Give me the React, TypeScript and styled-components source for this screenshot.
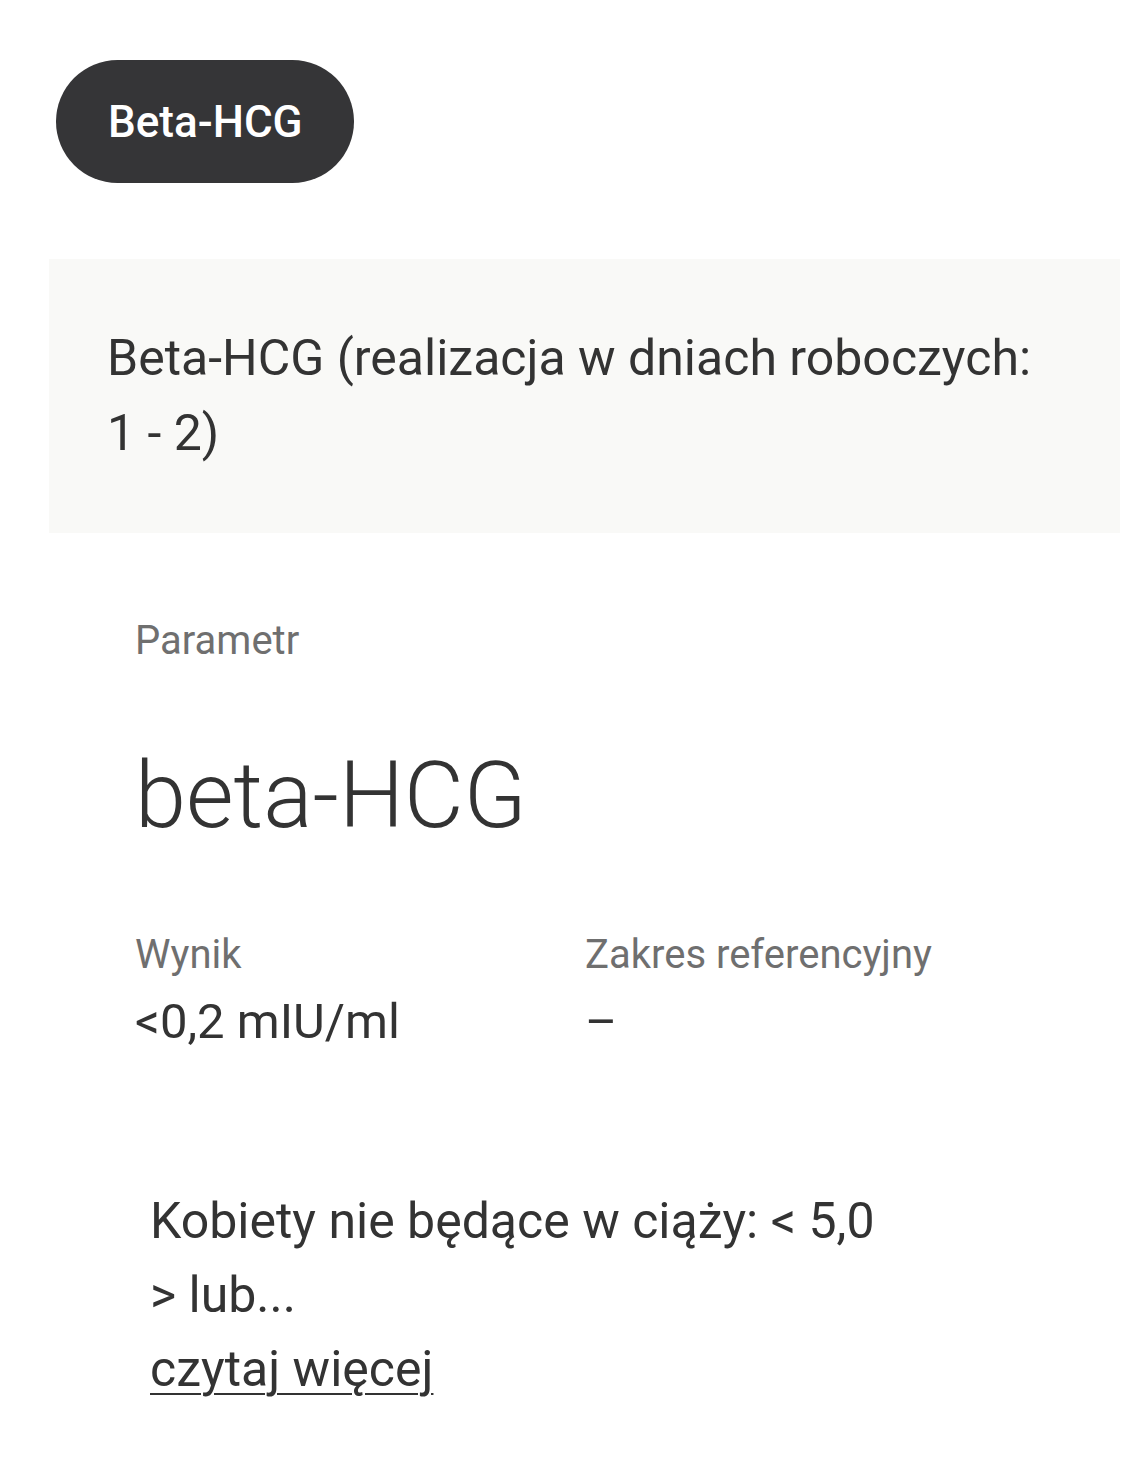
import React from 'react';
import styled, { createGlobalStyle } from 'styled-components';

const GlobalStyle = createGlobalStyle`
  body {
    margin: 0;
    background: #ffffff;
    font-family: Roboto, 'Noto Sans', sans-serif;
    color: #333333;
  }
`;

const Page = styled.div`
  display: flex;
  flex-direction: column;
  padding: 60px 4px 0 49px;
`;

const TagPill = styled.div`
  align-self: flex-start;
  margin-left: 7px;
  height: 123px;
  padding: 0 51px 0 52px;
  display: flex;
  align-items: center;
  border-radius: 62px;
  background-color: #353537;
  color: #ffffff;
  font-size: 44px;
  font-weight: 500;
`;

const TitleBox = styled.div`
  margin-top: 76px;
  height: 274px;
  padding: 0 80px 0 58px;
  display: flex;
  align-items: center;
  background-color: #f9f9f7;
  box-sizing: border-box;
`;

const TitleText = styled.div`
  font-size: 50px;
  line-height: 75px;
  color: #333333;
`;

const Details = styled.div`
  display: flex;
  flex-direction: column;
  padding: 0 0 0 86px;
`;

const Label = styled.div`
  font-size: 40px;
  color: #6f6f6f;
`;

const ParamLabel = styled(Label)`
  margin-top: 84px;
`;

const ParamName = styled.div`
  margin-top: 78px;
  font-size: 92px;
  font-weight: 300;
  color: #333333;
`;

const ResultGrid = styled.div`
  margin-top: 82px;
  display: grid;
  grid-template-columns: 450px 1fr;
  row-gap: 15px;
`;

const Value = styled.div`
  font-size: 49px;
  color: #333333;
`;

const NoteBlock = styled.div`
  margin-top: 134px;
  padding-left: 15px;
  font-size: 50px;
  line-height: 74px;
  color: #333333;
  max-width: 800px;
`;

const MoreLink = styled.a`
  color: #333333;
  text-decoration: underline;
  text-decoration-thickness: 2px;
  text-underline-offset: 7px;
`;

const App = () => {
  return (
    <Page>
      <GlobalStyle />
      <TagPill>Beta-HCG</TagPill>
      <TitleBox>
        <TitleText>Beta-HCG (realizacja w dniach roboczych: 1 - 2)</TitleText>
      </TitleBox>
      <Details>
        <ParamLabel>Parametr</ParamLabel>
        <ParamName>beta-HCG</ParamName>
        <ResultGrid>
          <Label>Wynik</Label>
          <Label>Zakres referencyjny</Label>
          <Value>&lt;0,2 mIU/ml</Value>
          <Value>–</Value>
        </ResultGrid>
        <NoteBlock>
          Kobiety nie będące w ciąży: &lt; 5,0
          <br />
          &gt; lub...
          <br />
          <MoreLink href="#">czytaj więcej</MoreLink>
        </NoteBlock>
      </Details>
    </Page>
  );
};

export default App;
